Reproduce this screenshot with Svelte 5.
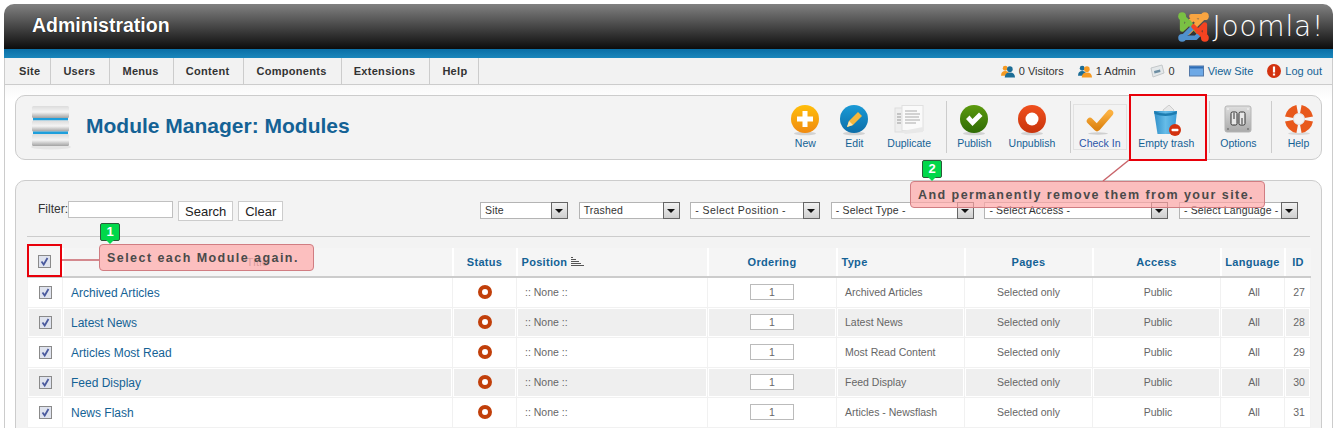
<script>
  const menus = ['Site', 'Users', 'Menus', 'Content', 'Components', 'Extensions', 'Help']
  const selects = [
    { label: 'Site', width: 88, spacing: 0.15 },
    { label: 'Trashed', width: 101, spacing: 0.2 },
    { label: '- Select Position -', width: 130, spacing: 0.45 },
    { label: '- Select Type -', width: 143, spacing: 0.15 },
    { label: '- Select Access -', width: 184, spacing: 0.15 },
    { label: '- Select Language -', width: 119, spacing: 0.15 }
  ]
  const modules = [
    { title: 'Archived Articles', type: 'Archived Articles', id: 27 },
    { title: 'Latest News', type: 'Latest News', id: 28 },
    { title: 'Articles Most Read', type: 'Most Read Content', id: 29 },
    { title: 'Feed Display', type: 'Feed Display', id: 30 },
    { title: 'News Flash', type: 'Articles - Newsflash', id: 31 }
  ]
</script>

{#snippet checkbox()}
  <svg class="check" width="13" height="13" viewBox="0 0 13 13">
    <rect x="0.5" y="0.5" width="12" height="12" fill="#dfe3ee" stroke="#8a8a8a" />
    <path d="M3.5 6.5 L5.7 9.5 L9.5 3" fill="none" stroke="#4a5a9e" stroke-width="1.8" />
  </svg>
{/snippet}

{#snippet user(a, b)}
  <svg width="14" height="15" viewBox="0 0 15 15">
    <circle cx="4.5" cy="4" r="2.6" fill={a} />
    <path d="M0 12 Q0 7 4.5 7 Q9 7 9 12 Z" fill={a} />
    <circle cx="9.5" cy="5" r="3" fill={b} />
    <path d="M4 14 Q4 8.5 9.5 8.5 Q15 8.5 15 14 Z" fill={b} />
  </svg>
{/snippet}

{#snippet ball(c1, c2)}
  <defs>
    <linearGradient id="g{c1.slice(1)}" x1="0" y1="0" x2="0" y2="1">
      <stop offset="0" stop-color={c1} />
      <stop offset="1" stop-color={c2} />
    </linearGradient>
  </defs>
  <ellipse cx="16" cy="28.5" rx="11" ry="1.8" fill="#d2d2d2" />
  <circle cx="16" cy="14" r="14" fill="url(#g{c1.slice(1)})" />
{/snippet}

<div class="shell">
  <header class="top">
    <h1>Administration</h1>
    <div class="logo">
      <svg width="31" height="30" viewBox="0 0 30 29">
        <g fill="none" stroke-width="4.4" stroke-linecap="round" stroke-linejoin="round">
          <path d="M6 15 L15 6 L18 9" stroke="#f9a541" />
          <path d="M13 4 L26 4 L10 20" stroke="#f9a541" />
          <path d="M4 4 L21 21" stroke="#7ac143" />
          <path d="M4 4 L4 17 L11 10" stroke="#7ac143" />
          <path d="M4 25 L14 15" stroke="#5091cd" />
          <path d="M4 25 L17 25 L20 22" stroke="#5091cd" />
          <path d="M26 25 L15 14" stroke="#f44321" />
          <path d="M26 25 L26 12 L19 19" stroke="#f44321" />
        </g>
        <circle cx="4" cy="4" r="3.8" fill="#7ac143" />
        <circle cx="26" cy="4" r="3.8" fill="#f9a541" />
        <circle cx="4" cy="25" r="3.8" fill="#5091cd" />
        <circle cx="26" cy="25" r="3.8" fill="#f44321" />
      </svg>
      <span class="wordmark">Joomla!</span>
    </div>
  </header>
  <div class="stripe"></div>

  <nav class="menubar">
    <ul>
      {#each menus as menu}
        <li>{menu}</li>
      {/each}
    </ul>
    <div class="status">
      <span class="stat">{@render user('#f59a23', '#1c6d96')}0 Visitors</span>
      <span class="stat">{@render user('#1c6d96', '#f59a23')}1 Admin</span>
      <span class="stat">
        <svg width="15" height="14" viewBox="0 0 15 14">
          <path d="M1 4 L12 1 L14 9 L3 13 Z" fill="#e4e8ea" stroke="#c4c8ca" />
          <path d="M4 7 L10 5.5 L10.5 8 L4.5 9.5 Z" fill="#6d8ea3" />
        </svg>
        0
      </span>
      <span class="stat link">
        <svg width="15" height="12" viewBox="0 0 15 12">
          <rect x="0.5" y="1" width="14" height="10" fill="#6ea9e6" stroke="#5479a8" />
          <rect x="1" y="1.5" width="13" height="2" fill="#2f6db5" />
        </svg>
        View Site
      </span>
      <span class="stat link">
        <svg width="14" height="14" viewBox="0 0 14 14">
          <circle cx="7" cy="7" r="7" fill="#d3320f" />
          <rect x="5.9" y="2.5" width="2.2" height="6" fill="#fff" />
          <rect x="5.9" y="9.5" width="2.2" height="2" fill="#fff" />
        </svg>
        Log out
      </span>
    </div>
  </nav>

  <main class="content">
    <section class="toolbar">
      <div class="title">
        <svg width="40" height="44" viewBox="0 0 40 44">
          <defs>
            <linearGradient id="slab" x1="0" y1="0" x2="0" y2="1">
              <stop offset="0" stop-color="#dcdcdc" />
              <stop offset="0.5" stop-color="#f4f4f4" />
              <stop offset="1" stop-color="#a2a2a2" />
            </linearGradient>
          </defs>
          <ellipse cx="20" cy="41" rx="20" ry="2.5" fill="#e4e4e4" />
          <rect x="1" y="0" width="37" height="12" rx="1.5" fill="url(#slab)" />
          <rect x="2" y="12" width="35" height="2.5" fill="#1e9fdc" />
          <rect x="1" y="14.5" width="37" height="11" rx="1.5" fill="url(#slab)" />
          <rect x="2" y="25.5" width="35" height="2.5" fill="#1e9fdc" />
          <rect x="1" y="28" width="37" height="12" rx="1.5" fill="url(#slab)" />
        </svg>
        <h2>Module Manager: Modules</h2>
      </div>
      <div class="tools">
        <div class="tool">
          <svg width="32" height="32" viewBox="0 0 32 32">
            {@render ball('#ffbe0a', '#f08a10')}
            <path d="M13.5 6 h5 v5.5 h5.5 v5 h-5.500 v5.500 h-5 v-5.500 h-5.500 v-5 h5.500 z" fill="#fff" />
          </svg>
          New
        </div>
        <div class="tool">
          <svg width="32" height="32" viewBox="0 0 32 32">
            {@render ball('#1a9ad6', '#0d6ea8')}
            <path d="M9 22 L11 16 L20 7 L24 11 L15 20 Z" fill="#f6b73c" />
            <path d="M9 22 L11 16 L15 20 Z" fill="#ffe8b0" />
          </svg>
          Edit
        </div>
        <div class="tool">
          <svg width="32" height="32" viewBox="0 0 32 32">
            <rect x="2" y="3" width="20" height="24" fill="#eeeeee" stroke="#dddddd" />
            <path d="M4 9 h4 M4 12 h4 M4 15 h4 M4 18 h4" stroke="#999" stroke-width="1" />
            <rect x="9" y="0.5" width="21" height="25" fill="#fafafa" stroke="#e0e0e0" />
            <path d="M12 6 h12 M12 9 h15 M12 12 h14 M12 15 h15 M12 18 h11" stroke="#aaa" stroke-width="1.2" />
            <path d="M9 26 L30 22 L30 27 L12 29 Z" fill="#e8e8e8" />
          </svg>
          Duplicate
        </div>
        <i class="sep"></i>
        <div class="tool">
          <svg width="32" height="32" viewBox="0 0 32 32">
            {@render ball('#5c9a0e', '#2f6b05')}
            <path d="M8 14 L11.5 10.5 L14.5 14 L21 7.5 L24.5 11 L14.5 21 Z" fill="#fff" />
          </svg>
          Publish
        </div>
        <div class="tool">
          <svg width="32" height="32" viewBox="0 0 32 32">
            {@render ball('#f0501e', '#c8340c')}
            <circle cx="16" cy="14" r="6.5" fill="#fff" />
          </svg>
          Unpublish
        </div>
        <i class="sep"></i>
        <div class="tool checkin">
          <svg width="32" height="32" viewBox="0 0 32 32">
            <defs>
              <linearGradient id="tick" x1="0" y1="0" x2="0" y2="1">
                <stop offset="0" stop-color="#fbb040" />
                <stop offset="1" stop-color="#dd8412" />
              </linearGradient>
            </defs>
            <ellipse cx="14" cy="28.5" rx="10" ry="1.2" fill="#cfcfcf" />
            <path d="M6 16 L13 23 L26 8" fill="none" stroke="url(#tick)" stroke-width="6.5" stroke-linecap="round" stroke-linejoin="round" />
          </svg>
          Check In
        </div>
        <div class="tool">
          <svg width="32" height="32" viewBox="0 0 32 32">
            <defs>
              <linearGradient id="bin" x1="0" y1="0" x2="1" y2="0">
                <stop offset="0" stop-color="#2f8fc8" />
                <stop offset="0.5" stop-color="#66bce8" />
                <stop offset="1" stop-color="#3a9cd6" />
              </linearGradient>
            </defs>
            <path d="M13 5 L19 0 L24 5 L22 8 L14 8 Z" fill="#e8e8e8" stroke="#aaa" stroke-width="0.5" />
            <path d="M4 6 H27 L24.5 29 H7.5 Z" fill="url(#bin)" />
            <path d="M4 6 Q15.5 11 27 6 L26.5 9 Q15.5 13 4.5 9 Z" fill="#1d7cb0" />
            <circle cx="25" cy="25" r="6" fill="#d3320f" />
            <rect x="21.5" y="23.8" width="7" height="2.4" rx="1" fill="#fff" />
          </svg>
          Empty trash
        </div>
        <i class="sep"></i>
        <div class="tool">
          <svg width="32" height="32" viewBox="0 0 32 32">
            <defs>
              <linearGradient id="plate" x1="0" y1="0" x2="0" y2="1">
                <stop offset="0" stop-color="#dedede" />
                <stop offset="1" stop-color="#a9a9a9" />
              </linearGradient>
            </defs>
            <rect x="3" y="1" width="26" height="26" rx="2" fill="url(#plate)" stroke="#b5b5b5" />
            <rect x="9" y="7" width="6" height="13" rx="1.5" fill="#e8e8e8" stroke="#333" />
            <rect x="17" y="7" width="6" height="13" rx="1.5" fill="#e8e8e8" stroke="#333" />
            <path d="M12 8 v6 M20 13 v6" stroke="#333" stroke-width="1" />
            <circle cx="6" cy="4" r="1" fill="#eee" />
            <circle cx="26" cy="4" r="1" fill="#eee" />
            <circle cx="6" cy="24" r="1" fill="#777" />
            <circle cx="26" cy="24" r="1" fill="#777" />
          </svg>
          Options
        </div>
        <i class="sep"></i>
        <div class="tool">
          <svg width="32" height="32" viewBox="0 0 32 32">
            <ellipse cx="16" cy="28.5" rx="11" ry="1.5" fill="#d8d8d8" />
            <circle cx="16" cy="14" r="10" fill="none" stroke="#f6f6f6" stroke-width="8" />
            <circle cx="16" cy="14" r="10" fill="none" stroke="#e8591c" stroke-width="8.5" stroke-dasharray="19 6" stroke-dashoffset="-3" pathLength="100" />
            <circle cx="16" cy="14" r="5.5" fill="#f3f3f3" stroke="#cfcfcf" stroke-width="0.5" />
          </svg>
          Help
        </div>
      </div>
    </section>

    <section class="panel">
      <div class="filters">
        <div class="search">
          <label for="filter">Filter:</label>
          <input id="filter" type="text" />
          <button type="button">Search</button>
          <button type="button">Clear</button>
        </div>
        <div class="selects">
          {#each selects as select}
            <div class="select" style:width="{select.width}px">
              <span style:letter-spacing="{select.spacing}px">{select.label}</span>
              <b></b>
            </div>
          {/each}
        </div>
      </div>
      <hr />
      <table>
        <colgroup>
          <col style:width="35px" />
          <col style:width="390px" />
          <col style:width="64px" />
          <col style:width="191px" />
          <col style:width="129px" />
          <col style:width="128px" />
          <col style:width="128px" />
          <col style:width="128px" />
          <col style:width="64px" />
          <col style:width="26px" />
        </colgroup>
        <thead>
          <tr>
            <th>{@render checkbox()}</th>
            <th class="faint">Title</th>
            <th>Status</th>
            <th class="left">
              Position
              <svg width="13" height="9" viewBox="0 0 13 9">
                <path d="M0 0.5 h2 M0 2.5 h5 M0 4.5 h8 M0 6.5 h10 M0 8.5 h13" stroke="#555" />
              </svg>
            </th>
            <th>Ordering</th>
            <th class="left">Type</th>
            <th>Pages</th>
            <th>Access</th>
            <th>Language</th>
            <th>ID</th>
          </tr>
        </thead>
        <tbody>
          {#each modules as mod}
            <tr>
              <td class="center">{@render checkbox()}</td>
              <td class="name">{mod.title}</td>
              <td class="center">
                <svg class="dot" width="14" height="14" viewBox="0 0 14 14">
                  <circle cx="7" cy="7" r="5" fill="#fff" stroke="#c13f0a" stroke-width="4" />
                </svg>
              </td>
              <td class="pad">:: None ::</td>
              <td class="center"><input class="order" type="text" value="1" readonly /></td>
              <td class="pad">{mod.type}</td>
              <td class="center">Selected only</td>
              <td class="center shift">Public</td>
              <td class="center shift">All</td>
              <td class="center shift">{mod.id}</td>
            </tr>
          {/each}
        </tbody>
      </table>
    </section>
  </main>

  <!-- tour overlay -->
  <svg class="lines" width="1342" height="428">
    <path d="M62 260 H99" stroke="#c9656b" stroke-width="1.5" />
    <path d="M1129 160 L1103 181" stroke="#c9656b" stroke-width="1.5" />
  </svg>
  <div class="marker one"></div>
  <div class="marker two"></div>
  <div class="badge b1">1</div>
  <div class="badge b2">2</div>
  <div class="tip t1">Select each Module again.</div>
  <div class="tip t2">And permanently remove them from your site.</div>
</div>

<style>
  :global(body) {
    background: #fff;
    overflow: hidden;
    font-family: "Liberation Sans", Arial, sans-serif;
  }

  .shell {
    position: relative;
    height: 428px;
    overflow: hidden;
    padding: 4px 9px 0 4px;
    box-sizing: border-box;
  }

  .top {
    height: 45px;
    display: flex;
    align-items: center;
    justify-content: space-between;
    padding: 0 9px 0 28px;
    border-radius: 10px 10px 0 0;
    background: linear-gradient(#818181, #0c0c0c);
    color: #fff;
  }

  .top h1 {
    margin: 0 0 2px;
    font-size: 19.5px;
    font-weight: bold;
    text-shadow: 0 0 1px #000;
  }

  .logo {
    display: flex;
    align-items: center;
    gap: 3px;
  }

  .wordmark {
    font-family: "DejaVu Sans", sans-serif;
    font-weight: 200;
    font-size: 28px;
    letter-spacing: 0.8px;
    color: #fff;
  }

  .stripe {
    height: 9px;
    background: linear-gradient(#0b6fa6, #1a86bb);
  }

  .menubar {
    height: 26px;
    display: flex;
    justify-content: space-between;
    background: #f2f2f2;
    border-left: 1px solid #ccc;
    border-right: 1px solid #ccc;
    border-bottom: 1px solid #ccc;
    font-size: 11px;
  }

  .menubar ul {
    display: flex;
    margin: 0;
    padding: 0;
    list-style: none;
  }

  .menubar li {
    padding: 0 14px 0 12px;
    line-height: 26px;
    font-weight: bold;
    letter-spacing: 0.3px;
    color: #333;
    border-right: 1px solid #ccc;
  }

  .menubar li:first-child {
    padding: 0 10px 0 14px;
  }

  .menubar li:last-child {
    padding: 0 11px 0 12px;
  }

  .status {
    display: flex;
    align-items: center;
    gap: 14px;
    padding-right: 10px;
    color: #333;
  }

  .stat {
    display: flex;
    align-items: center;
    gap: 4px;
  }

  .link {
    color: #146295;
  }

  .content {
    height: 343px;
    padding: 10px 10px 0;
    border-left: 1px solid #ccc;
    border-right: 1px solid #ccc;
    background: linear-gradient(#f8f8f8, #fff 14px);
  }

  .toolbar {
    height: 63px;
    display: flex;
    justify-content: space-between;
    align-items: center;
    padding: 0 0 0 15px;
    background: #f3f3f3;
    border: 1px solid #ccc;
    border-radius: 10px;
  }

  .title {
    display: flex;
    align-items: center;
    gap: 15px;
  }

  .title h2 {
    margin: 0 0 4px;
    font-size: 21px;
    color: #146295;
  }

  .tools {
    display: flex;
    align-items: center;
    margin: 0 -2px 2px 0;
    color: #146295;
    font-size: 10.5px;
    line-height: 12px;
  }

  .tool {
    display: flex;
    flex-direction: column;
    align-items: center;
    min-width: 32px;
    padding: 0 8.5px;
  }

  .checkin {
    padding: 0 4px;
    min-width: 44px;
    border: 1px solid #e2e2e2;
    color: #2a55a8;
    margin-right: 3px;
  }

  .sep {
    width: 1px;
    height: 52px;
    margin: 0 2px 0 6px;
    background: #ccc;
  }

  .panel {
    margin-top: 20px;
    height: 260px;
    padding: 20px 11px 0;
    background: #f3f3f3;
    border: 1px solid #ccc;
    border-radius: 10px 10px 0 0;
  }

  .filters {
    display: flex;
    justify-content: space-between;
    padding: 0 12px 0 11px;
    height: 21px;
    font-size: 12px;
  }

  .search {
    display: flex;
    align-items: flex-start;
    color: #333;
  }

  .search label {
    line-height: 17px;
  }

  .search input {
    width: 105px;
    height: 17px;
    box-sizing: border-box;
    border: 1px solid #c0c0c0;
    background: #fff;
    margin: 0 5px 0 0;
    padding: 0;
  }

  .search button {
    height: 20px;
    padding: 0 6px;
    margin-right: 5px;
    background: #fff;
    border: 1px solid #ccc;
    font: 13px "Liberation Sans", Arial, sans-serif;
    color: #222;
  }

  .selects {
    display: flex;
    gap: 10.6px;
    padding-top: 1px;
  }

  .select {
    height: 17px;
    box-sizing: border-box;
    display: flex;
    justify-content: space-between;
    background: #fff;
    border: 1px solid #b4b4b4;
    font-size: 10.5px;
    line-height: 15px;
    color: #333;
    padding-left: 4px;
  }

  .select span {
    white-space: nowrap;
  }

  .select b {
    width: 15px;
    flex: none;
    position: relative;
    background: linear-gradient(#f2f2f2, #cfcfcf);
    border: 1px solid #666;
    margin: -1px -1px -1px 0;
  }

  .select b::after {
    content: '';
    position: absolute;
    left: 3px;
    top: 6px;
    border: 4px solid transparent;
    border-top-color: #111;
    border-bottom: 0;
  }

  hr {
    margin: 14px 0 11px;
    height: 1px;
    border: 0;
    background: #ccc;
  }

  table {
    width: 1283px;
    table-layout: fixed;
    border-collapse: collapse;
    font-size: 10.5px;
    color: #666;
  }

  th {
    height: 29px;
    padding: 0 0 1px;
    box-sizing: border-box;
    background: #f5f5f5;
    border-left: 2px solid #fff;
    border-bottom: 2px solid #ccc;
    color: #146295;
    font-size: 11px;
    letter-spacing: 0.3px;
    text-align: center;
  }

  th:first-child {
    border-left: 0;
  }

  th.left {
    text-align: left;
    padding-left: 4px;
  }

  th.faint {
    color: #888;
    font-weight: normal;
  }

  td {
    height: 30px;
    box-sizing: border-box;
    padding: 0;
    background: #fff;
    border: 1px solid #f1f1f1;
  }

  tbody tr:nth-child(even) td {
    background: #efefef;
    box-shadow: inset 0 0 0 1px #fff;
  }

  .center {
    text-align: center;
  }

  .shift {
    padding-left: 3px;
  }

  .pad {
    padding-left: 8px;
  }

  .name {
    padding: 2px 0 0 8px;
    font-size: 12px;
    color: #146295;
  }

  .check {
    display: block;
    margin: 0 auto;
  }

  .dot {
    display: block;
    margin: 0 auto;
  }

  .order {
    width: 44px;
    height: 16px;
    box-sizing: border-box;
    display: block;
    margin: 0 auto;
    padding: 0;
    text-align: center;
    font: 10.5px "Liberation Sans", Arial, sans-serif;
    color: #666;
    background: #fff;
    border: 1px solid #bbb;
  }

  .lines {
    position: absolute;
    left: 0;
    top: 0;
  }

  .marker {
    position: absolute;
    box-sizing: border-box;
    border: 2px solid #e8000a;
  }

  .one {
    left: 27px;
    top: 244px;
    width: 35px;
    height: 33px;
  }

  .two {
    left: 1129px;
    top: 94px;
    width: 78px;
    height: 67px;
  }

  .badge {
    position: absolute;
    width: 20px;
    height: 18px;
    box-sizing: border-box;
    background: #00d84a;
    border: 1px solid #2c5a3a;
    border-radius: 2px;
    color: #fff;
    font: bold 13px/16px "Liberation Sans", Arial, sans-serif;
    text-align: center;
  }

  .badge::after {
    content: '';
    position: absolute;
    left: 5px;
    bottom: -4px;
    border: 4px solid transparent;
    border-top-color: #00d84a;
    border-bottom: 0;
  }

  .b1 {
    left: 100px;
    top: 223px;
  }

  .b2 {
    left: 922px;
    top: 160px;
  }

  .tip {
    position: absolute;
    box-sizing: border-box;
    height: 27px;
    padding-left: 7px;
    background: rgba(255, 165, 165, 0.68);
    border: 1px solid #d07d82;
    border-radius: 4px;
    font: bold 12.5px/26px "Liberation Sans", Arial, sans-serif;
    letter-spacing: 1.45px;
    color: #4a4a4a;
    white-space: nowrap;
  }

  .t1 {
    left: 99px;
    top: 244px;
    width: 215px;
  }

  .t2 {
    left: 910px;
    top: 181px;
    width: 355px;
  }
</style>
